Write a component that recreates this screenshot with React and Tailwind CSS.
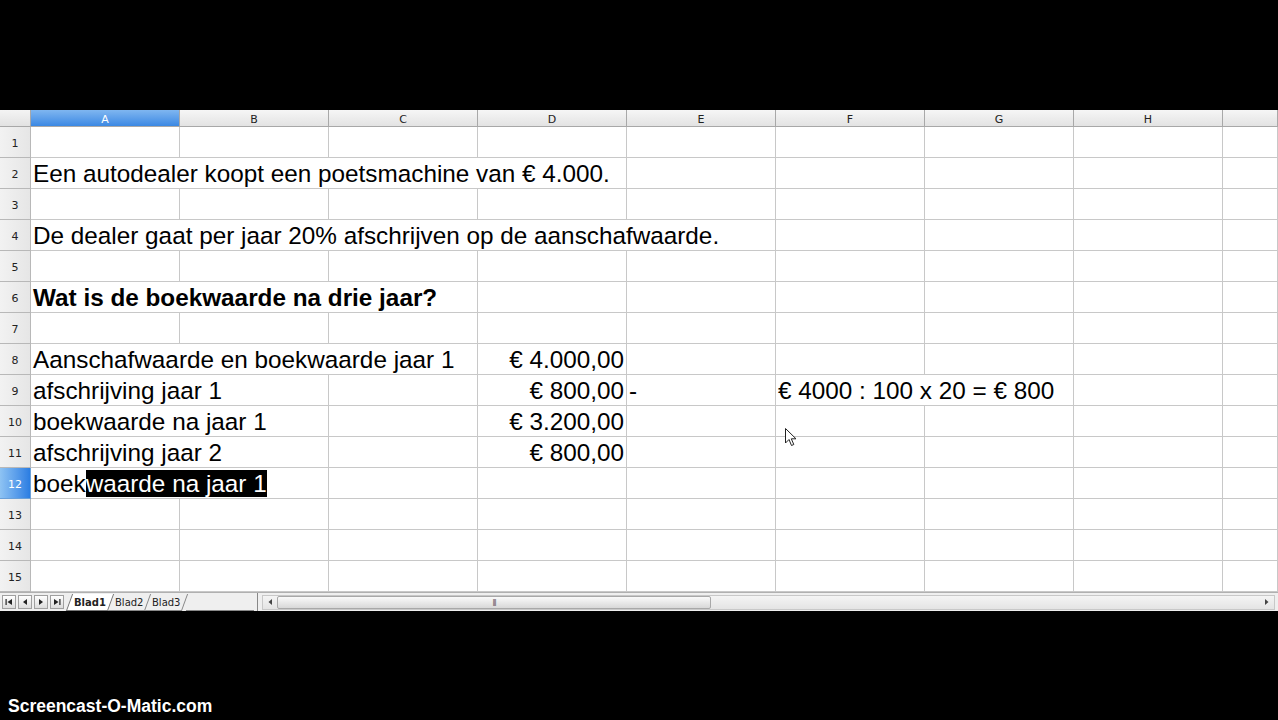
import React from "react";

const COLS = ["A", "B", "C", "D", "E", "F", "G", "H", ""];

// each row: list of cells { span, text, align, bold, sel }
const ROWS = [
  [],
  [{ span: 4, text: "Een autodealer koopt een poetsmachine van € 4.000." }],
  [],
  [{ span: 5, text: "De dealer gaat per jaar 20% afschrijven op de aanschafwaarde." }],
  [],
  [{ span: 3, text: "Wat is de boekwaarde na drie jaar?", bold: true }],
  [],
  [
    { span: 3, text: "Aanschafwaarde en boekwaarde jaar 1" },
    { span: 1, text: "€ 4.000,00", align: "right" },
  ],
  [
    { span: 2, text: "afschrijving jaar 1" },
    { span: 1, text: "" },
    { span: 1, text: "€ 800,00", align: "right" },
    { span: 1, text: "-" },
    { span: 2, text: "€ 4000 : 100 x 20 = € 800" },
  ],
  [
    { span: 2, text: "boekwaarde na jaar 1" },
    { span: 1, text: "" },
    { span: 1, text: "€ 3.200,00", align: "right" },
  ],
  [
    { span: 2, text: "afschrijving jaar 2" },
    { span: 1, text: "" },
    { span: 1, text: "€ 800,00", align: "right" },
  ],
  [{ span: 2, sel: true }],
  [],
  [],
  [],
];

const spanClass = {
  1: "col-span-1",
  2: "col-span-2",
  3: "col-span-3",
  4: "col-span-4",
  5: "col-span-5",
};

function fillRow(cells) {
  const out = [...cells];
  let used = cells.reduce((s, c) => s + c.span, 0);
  while (used < 9) {
    out.push({ span: 1, text: "" });
    used++;
  }
  return out;
}

function NavBtn({ children }) {
  return (
    <div className="w-[14px] h-[14px] border border-[#a0a0a0] bg-gradient-to-b from-white to-[#dcdcdc] flex items-center justify-center text-[#222]">
      {children}
    </div>
  );
}

export default function App() {
  return (
    <div className="relative w-[1278px] h-[720px] bg-black overflow-hidden" style={{ fontFamily: '"Liberation Sans", Arial, sans-serif' }}>
      <div className="h-[110px]" />
      {/* sheet */}
      <div className="bg-white">
        <div className="grid grid-cols-[31px_repeat(8,149px)_1fr] grid-rows-[17px] h-[17px] text-[11px] leading-none text-[#222]" style={{ fontFamily: '"DejaVu Sans", sans-serif' }}>
          <div className="bg-gradient-to-b from-[#f4f4f4] to-[#e2e2e2] border-r border-b border-[#a8a8a8]" />
          {COLS.map((c, i) => (
            <div
              key={i}
              className={`flex items-center justify-center pt-[2px] border-r border-b border-[#a8a8a8] ${
                c === "A"
                  ? "bg-gradient-to-b from-[#7fb6f0] to-[#3a88e3] text-white"
                  : "bg-gradient-to-b from-[#f6f6f6] to-[#e3e3e3]"
              }`}
            >
              {c}
            </div>
          ))}
        </div>
        {ROWS.map((row, r) => (
          <div key={r} className="grid grid-cols-[31px_repeat(8,149px)_1fr] grid-rows-[31px] h-[31px]">
            <div
              className={`flex items-center justify-center pt-[2px] text-[11px] leading-none border-r border-b ${
                r === 11
                  ? "bg-gradient-to-r from-[#8ec3f3] to-[#2a7de2] text-white border-[#6aa0d8]"
                  : "bg-gradient-to-r from-[#f2f2f2] to-[#e6e6e6] text-[#222] border-[#b8b8b8]"
              }`}
              style={{ fontFamily: '"DejaVu Sans", sans-serif' }}
            >
              {r + 1}
            </div>
            {fillRow(row).map((c, i) => (
              <div
                key={i}
                className={`${spanClass[c.span]} flex items-center pt-[3px] border-r border-b border-[#c8c8c8] text-[24.3px] leading-none text-black whitespace-nowrap overflow-hidden ${
                  c.align === "right" ? "justify-end pr-[2px]" : "pl-[2px]"
                } ${c.bold ? "font-bold" : ""}`}
              >
                {c.sel ? (
                  <span>
                    boek<span className="bg-black text-white">waarde na jaar 1</span>
                  </span>
                ) : (
                  c.text
                )}
              </div>
            ))}
          </div>
        ))}
        {/* tab bar + scrollbar */}
        <div className="flex items-center h-[19px] bg-[#efefef] border-t border-[#b0b0b0]">
          <div className="flex items-center gap-[2px] pl-[2px] w-[64px]">
            <NavBtn>
              <svg width="8" height="8" viewBox="0 0 8 8"><rect x="0.5" y="1" width="1.2" height="6" fill="#222" /><path d="M7 1 L2.5 4 L7 7 Z" fill="#222" /></svg>
            </NavBtn>
            <NavBtn>
              <svg width="8" height="8" viewBox="0 0 8 8"><path d="M6 1 L2 4 L6 7 Z" fill="#222" /></svg>
            </NavBtn>
            <NavBtn>
              <svg width="8" height="8" viewBox="0 0 8 8"><path d="M2 1 L6 4 L2 7 Z" fill="#222" /></svg>
            </NavBtn>
            <NavBtn>
              <svg width="8" height="8" viewBox="0 0 8 8"><path d="M1 1 L5.5 4 L1 7 Z" fill="#222" /><rect x="6.3" y="1" width="1.2" height="6" fill="#222" /></svg>
            </NavBtn>
          </div>
          <div className="relative flex items-end h-full w-[190px] text-[10px] text-[#222]" style={{ fontFamily: '"DejaVu Sans", sans-serif' }}>
            <div className="h-[17px] px-[4px] -skew-x-[20deg] bg-white border-l border-r border-b border-[#777] flex items-center ml-[5px]">
              <span className="skew-x-[20deg] font-bold">Blad1</span>
            </div>
            <div className="h-[17px] px-[4px] -skew-x-[20deg] border-r border-b border-[#888] flex items-center">
              <span className="skew-x-[20deg]">Blad2</span>
            </div>
            <div className="h-[17px] px-[4px] -skew-x-[20deg] border-r border-b border-[#888] flex items-center">
              <span className="skew-x-[20deg]">Blad3</span>
            </div>
            <div className="flex-1 border-b border-[#888] h-[17px]" />
          </div>
          <div className="w-[4px] h-full border-r border-[#888]" />
          <div className="flex-1 flex items-center h-[15px] ml-[4px] mr-[3px] bg-gradient-to-b from-[#f4f4f4] to-[#e4e4e4] border border-[#c8c8c8]">
            <div className="w-[14px] h-full flex items-center justify-center">
              <svg width="6" height="8" viewBox="0 0 6 8"><path d="M5 1 L1.5 4 L5 7 Z" fill="#444" /></svg>
            </div>
            <div className="w-[434px] h-[13px] rounded-[2px] border border-[#a8a8a8] bg-gradient-to-b from-[#fafafa] to-[#d8d8d8] flex items-center justify-center">
              <span className="text-[8px] leading-none text-[#555] tracking-[-1px]">|||</span>
            </div>
            <div className="flex-1" />
            <div className="w-[14px] h-full flex items-center justify-center">
              <svg width="6" height="8" viewBox="0 0 6 8"><path d="M1 1 L4.5 4 L1 7 Z" fill="#444" /></svg>
            </div>
          </div>
        </div>
      </div>
      {/* watermark */}
      <div className="absolute left-[8px] top-[698px] text-white font-bold text-[17.5px] leading-none" style={{ fontFamily: '"Liberation Sans", Arial, sans-serif' }}>
        Screencast-O-Matic.com
      </div>
      {/* mouse pointer */}
      <svg className="absolute left-[785px] top-[428px]" width="13" height="19" viewBox="0 0 13 19">
        <path d="M0.5 0.5 L0.5 15 L4 11.5 L6.5 17.5 L8.8 16.5 L6.3 10.8 L11 10.8 Z" fill="white" stroke="#222" strokeWidth="1" strokeLinejoin="round" />
      </svg>
    </div>
  );
}
